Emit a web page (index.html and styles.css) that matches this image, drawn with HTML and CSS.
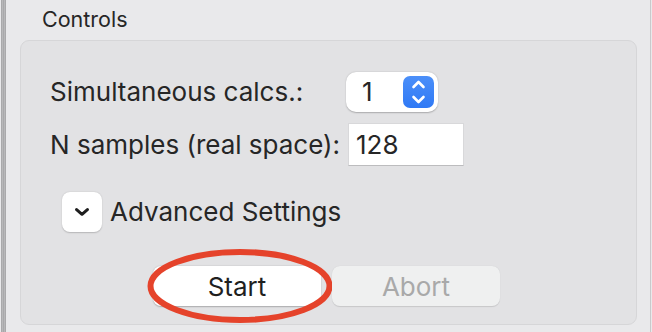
FILE: index.html
```html
<!DOCTYPE html>
<html>
<head>
<meta charset="utf-8">
<link rel="stylesheet" href="styles.css">
</head>
<body>
<div class="window">
  <div class="edge-left"></div>
  <div class="content">
    <div class="title">Controls</div>
    <div class="panel">
      <div class="row row1">
        <span class="label">Simultaneous calcs.:</span>
        <div class="popup">
          <span class="popup-value">1</span>
          <span class="stepper">
            <svg width="31" height="32" viewBox="0 0 31 32">
              <path d="M10.5 11 L15.5 6 L20.5 11" fill="none" stroke="#fff" stroke-width="2.6" stroke-linecap="round" stroke-linejoin="round"/>
              <path d="M10.5 21 L15.5 26 L20.5 21" fill="none" stroke="#fff" stroke-width="2.6" stroke-linecap="round" stroke-linejoin="round"/>
            </svg>
          </span>
        </div>
      </div>
      <div class="row row2">
        <span class="label">N samples (real space):</span>
        <div class="field">128</div>
      </div>
      <div class="row row3">
        <div class="disclosure">
          <svg width="14" height="8" viewBox="0 0 14 8">
            <path d="M1.6 1.6 L7 6.3 L12.4 1.6" fill="none" stroke="#1e1e1e" stroke-width="3" stroke-linecap="round" stroke-linejoin="round"/>
          </svg>
        </div>
        <span class="adv">Advanced Settings</span>
      </div>
      <div class="row row4">
        <div class="btn start">Start
          <svg class="ring" width="190" height="80" viewBox="0 0 190 80">
            <ellipse cx="94" cy="38" rx="89.5" ry="34" fill="none" stroke="#e5432b" stroke-width="6"/>
          </svg>
        </div>
        <div class="btn abort">Abort</div>
      </div>
    </div>
  </div>
  <div class="edge-right"></div>
</div>
</body>
</html>
```
FILE: styles.css
```css
html, body {
  margin: 0;
  padding: 0;
}
body {
  width: 652px;
  height: 332px;
  overflow: hidden;
  background: #e9e9eb;
  font-family: Inter, "Noto Sans", sans-serif;
  color: #262626;
}
.window {
  display: flex;
  height: 332px;
}
.edge-left {
  width: 5px;
  margin-left: 1px;
  background: repeating-linear-gradient(90deg, #a9a9ab 0 1px, #b8b8ba 1px 2px);
  flex: none;
}
.content {
  flex: 1;
  padding-left: 14px;
}
.edge-right {
  width: 1px;
  background: #c9c9cb;
  margin-right: 1px;
  flex: none;
}
.title {
  font-size: 21.5px;
  line-height: 26px;
  padding-top: 6px;
  padding-left: 22px;
  height: 32px;
  box-sizing: border-box;
  color: #262626;
}
.panel {
  margin-top: 8px;
  width: 617px;
  height: 285px;
  box-sizing: border-box;
  background: #e2e2e4;
  border: 1px solid #d6d6d8;
  border-radius: 9px;
  padding-top: 31px;
  padding-left: 29px;
  display: flex;
  flex-direction: column;
}
.row {
  display: flex;
  align-items: center;
}
.label {
  font-size: 26px;
  line-height: 32px;
}
.row1 {
  height: 40px;
}
.row1 .label {
  width: 296px;
}
.popup {
  width: 92px;
  height: 40px;
  box-sizing: border-box;
  background: #fff;
  border-radius: 10px;
  box-shadow: 0 0.5px 1.5px rgba(0,0,0,0.25);
  display: flex;
  align-items: center;
  justify-content: space-between;
  padding: 0 4px 0 16px;
}
.popup-value {
  font-size: 26px;
  line-height: 32px;
}
.stepper {
  width: 31px;
  height: 32px;
  border-radius: 7px;
  background: linear-gradient(#4b8ff9, #2f79f5);
  display: flex;
}
.row2 {
  margin-top: 11px;
  height: 43px;
}
.row2 .label {
  width: 298px;
}
.field {
  width: 116px;
  height: 43px;
  box-sizing: border-box;
  background: #fff;
  border: 1px solid #d8d8da;
  border-bottom-color: #bcbcbe;
  font-size: 26px;
  line-height: 41px;
  padding-left: 7px;
}
.row3 {
  margin-top: 26px;
  height: 40px;
  padding-left: 12px;
}
.disclosure {
  width: 40px;
  height: 40px;
  background: #fff;
  border-radius: 8px;
  box-shadow: 0 0.5px 1.5px rgba(0,0,0,0.2);
  display: flex;
  align-items: center;
  justify-content: center;
}
.adv {
  font-size: 26px;
  line-height: 32px;
  margin-left: 8px;
}
.row4 {
  margin-top: 34px;
  height: 40px;
  padding-left: 103px;
  gap: 11px;
}
.btn {
  width: 168px;
  height: 40px;
  border-radius: 8px;
  display: flex;
  align-items: center;
  justify-content: center;
  font-size: 26px;
  position: relative;
}
.start {
  background: #fff;
  box-shadow: 0 0.5px 1.5px rgba(0,0,0,0.25);
  color: #1f1f1f;
}
.abort {
  background: #eff0f0;
  color: #a9a9a9;
  box-shadow: 0 0.5px 1px rgba(0,0,0,0.12);
}
.ring {
  position: absolute;
  left: -7px;
  top: -18px;
}
```
